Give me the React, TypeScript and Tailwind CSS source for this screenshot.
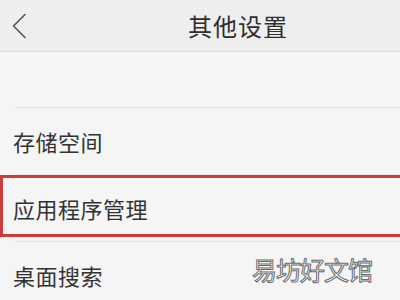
import React from "react"

const font = { fontFamily: '"Noto Sans CJK SC", "Noto Sans", sans-serif' }

const items = ["存储空间", "应用程序管理", "桌面搜索"]

export default function App() {
  return (
    <div className="w-[400px] h-[300px] overflow-hidden bg-[#f5f5f5]" style={font}>
      {/* header */}
      <div className="h-[52px] flex items-center bg-[#eeeeee] border-b border-[#dadada] pl-[11px]">
        <svg width="16" height="26" viewBox="0 0 16 26" fill="none">
          <path d="M14 1.5 L2.5 13 L14 24.5" stroke="#555" strokeWidth="1.6" strokeLinecap="round" strokeLinejoin="round" />
        </svg>
        <span className="ml-[161px] text-[24px] leading-none text-[#2e2e2e] tracking-[1px]">其他设置</span>
      </div>

      <div className="h-[55px]" />

      {items.map((t, i) => (
        <div key={t} className="relative h-[67px] flex flex-col">
          <div className="ml-[15px] border-t border-[#e4e4e4]" />
          <div className="flex-1 flex items-center justify-between pl-[13px] pr-[28px]">
            <span className="text-[22px] leading-none text-[#333] tracking-[0.5px]">{t}</span>
            {i === 2 && (
              <span
                className="mb-[12px] text-[25px] leading-none text-white tracking-[-1px] [-webkit-text-stroke:1px_#6a6a6a]"
              >
                易坊好文馆
              </span>
            )}
          </div>
          {i === 1 && (
            <div className="absolute left-0 right-[-10px] top-[1px] bottom-[4px] border-[3px] border-[#d23a3a]" />
          )}
        </div>
      ))}
    </div>
  )
}
